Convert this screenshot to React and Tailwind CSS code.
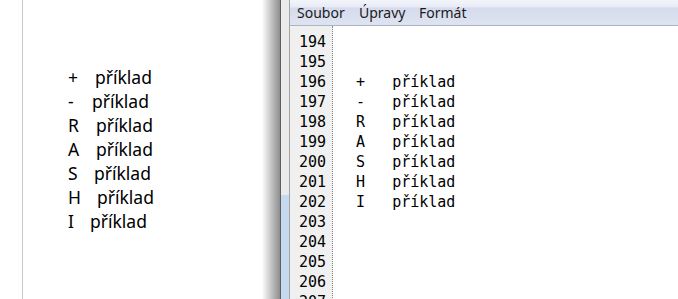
import React from "react";

const leftRows = [
  { s: "+", w: "w-[27px]" },
  { s: "-", w: "w-[24px]" },
  { s: "R", w: "w-[28px]" },
  { s: "A", w: "w-[28px]" },
  { s: "S", w: "w-[26px]" },
  { s: "H", w: "w-[29px]" },
  { s: "I", w: "w-[22px]" },
];

const lines = [];
for (let n = 194; n <= 207; n++) lines.push(n);

const symbols = { 196: "+", 197: "-", 198: "R", 199: "A", 200: "S", 201: "H", 202: "I" };

export default function App() {
  return (
    <div className="flex h-[299px] w-[678px] overflow-hidden bg-white">
      {/* left document */}
      <div className="flex w-[262px] shrink-0">
        <div className="w-[22px] shrink-0" />
        <div className="flex-1 border-l border-[#c8c8c8] pl-[45px] pt-[65px] font-['Noto_Sans',sans-serif] text-[17.5px] leading-[24px] text-black">
          {leftRows.map((r) => (
            <div key={r.s} className="flex">
              <span className={`${r.w} shrink-0`}>{r.s}</span>
              <span>příklad</span>
            </div>
          ))}
        </div>
      </div>

      {/* window shadow + frame */}
      <div className="w-[18px] shrink-0 bg-gradient-to-r from-white to-[#8e8e8e]" />
      <div className="w-[1px] shrink-0 bg-[#5e5e5e]" />
      <div className="flex w-[8px] shrink-0 flex-col">
        <div className="h-[195px] bg-[#ebebeb]" />
        <div className="flex-1 bg-[#c6d9ee]" />
      </div>
      <div className="w-[1px] shrink-0 bg-[#a3a3a3]" />

      {/* editor window */}
      <div className="flex flex-1 flex-col">
        <div className="flex h-[26px] shrink-0 items-center border-b border-[#adb2c5] bg-[linear-gradient(to_bottom,#f3f5fb_0px,#e8ebf6_7px,#d5dbec_8px,#dfe4f2_25px)] pl-[7px] font-['Noto_Sans',sans-serif] text-[14px] text-[#1b1b1b]">
          <span className="w-[62px]">Soubor</span>
          <span className="w-[60px]">Úpravy</span>
          <span>Formát</span>
        </div>
        <div className="flex flex-1 font-['DejaVu_Sans_Mono',monospace] text-[15px] leading-[20px] text-black">
          <div className="w-[43px] shrink-0 border-r border-dotted border-[#8a8a8a] bg-[#f0f0f0] pr-[6px] pt-[6px] text-right">
            {lines.map((n) => (
              <div key={n}>{n}</div>
            ))}
          </div>
          <div className="flex-1 whitespace-pre pl-[5px] pt-[6px]">
            {lines.map((n) => (
              <div key={n} className="h-[20px]">
                {symbols[n] ? `  ${symbols[n]}   příklad` : ""}
              </div>
            ))}
          </div>
        </div>
      </div>
    </div>
  );
}
